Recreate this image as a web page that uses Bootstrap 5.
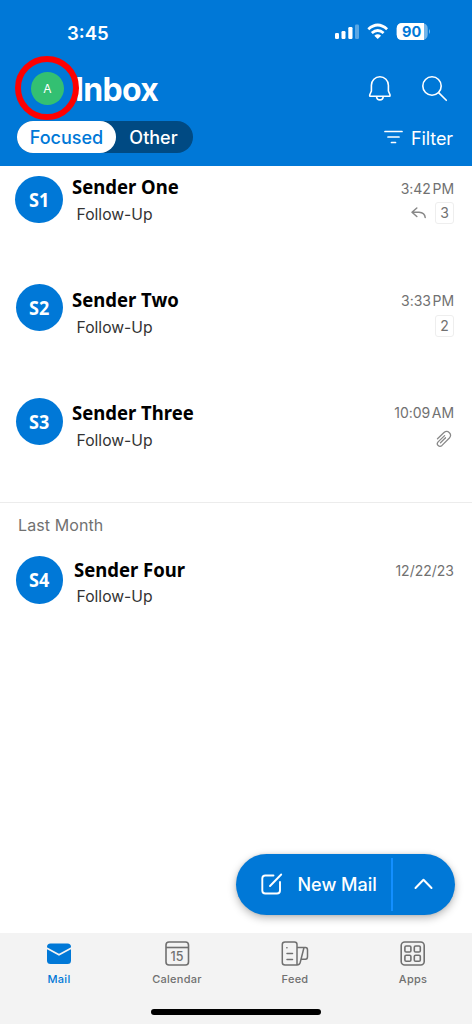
<!DOCTYPE html>
<html lang="en">
<head>
<meta charset="utf-8">
<meta name="viewport" content="width=device-width, initial-scale=1">
<title>Inbox</title>
<link href="https://cdn.jsdelivr.net/npm/bootstrap@5.3.0/dist/css/bootstrap.min.css" rel="stylesheet">
<script src="https://cdn.jsdelivr.net/npm/bootstrap@5.3.0/dist/js/bootstrap.bundle.min.js" defer></script>
<style>
:root{--blue:#0078d7}
body{font-family:Inter,"Liberation Sans",sans-serif;background:#fff;color:#333;height:1024px;overflow:hidden}
svg{display:block;flex:none}
.top-bar{height:166px;background:var(--blue)}
.status{height:64px;padding:0 42px 0 67px}
.clock{font-size:18.5px;font-weight:600;line-height:20px;padding-top:2px}
.title-row{height:50px;padding:0 24px 0 31px}
.me{width:33px;height:33px;margin-top:-1px;background:#33c072;font-size:12px}
.ring{position:absolute;left:-16px;top:-16px;width:64px;height:64px;border:6px solid #f00;border-radius:50%}
.title{font-size:32px;font-weight:700;line-height:40px;letter-spacing:-.7px;margin-left:11px;padding-top:2px}
.tab-row{height:32px;margin-top:7px;padding:0 19px 0 17px}
.segment{width:176px;height:32px;background:#004a83;font-size:18px;font-weight:500}
.segment span{line-height:33px;text-align:center}
.seg-on{width:99px;background:#fff;color:var(--blue)}
.seg-off{width:75px}
.filter{font-size:18px;line-height:32px;letter-spacing:-.1px}
.mail{height:112px;padding:0 18px 0 15px}
.avatar{width:47.5px;height:47.5px;background:var(--blue);color:#fff;font:700 20px/48px "Noto Sans",sans-serif;text-align:center;flex:none}
.avatar span{display:inline-block;transform:scaleX(.9)}
.sender{font:700 20px/26px "Noto Sans",sans-serif;color:#000;transform:scaleX(.925);transform-origin:0 0;white-space:nowrap}
.subject{font-size:15.7px;line-height:20px;padding-left:5px;position:relative;top:1px}
.stamp{font-size:14px;line-height:18px;color:#717171;white-space:nowrap}
.when{word-spacing:-2.2px;letter-spacing:-.05px}
.tally{width:19px;height:22px;border:1px solid #eee;border-radius:3px;font-size:14px;line-height:20px;text-align:center}
.section{height:46px;border-top:1px solid #ececec;padding:12px 18px 0;font-size:16px;letter-spacing:.1px;line-height:20px;color:#717171}
.compose{position:absolute;left:236px;top:853.5px;width:218.5px;height:61.5px;background:var(--blue);box-shadow:0 3px 8px rgba(0,0,0,.28),0 0 3px rgba(0,0,0,.1)}
.compose-main{width:155px;padding-left:25px;font-size:18px;font-weight:500}
.compose-split{width:2px;height:53px;background:#138fff}
.tabs{position:absolute;left:0;top:933px;width:472px;height:91px;background:#f3f3f3;font-size:11px;font-weight:500;color:#707070}
.tab{width:118px;padding-top:7px}
.tab span{line-height:14px;margin-top:3.5px;letter-spacing:.25px}
.home{position:absolute;left:151px;top:76px;width:170px;height:6px;background:#000}
</style>
</head>
<body class="position-relative">
<header class="top-bar text-white">
  <div class="status d-flex align-items-center justify-content-between">
    <span class="clock">3:45</span>
    <svg width="98" height="20" viewBox="332 22 98 20">
      <g fill="#fff"><rect x="335" y="33" width="4" height="6" rx="1.2"/><rect x="341.500" y="31" width="4" height="8" rx="1.2"/><rect x="348.300" y="27" width="4.200" height="12" rx="1.2"/><rect x="355" y="24.500" width="4" height="14.500" rx="1.2" opacity=".35"/></g>
      <g fill="none" stroke="#fff" stroke-width="2.800"><path d="M368.300 29.200Q377.700 20.900 387.100 29.200M371.800 33Q377.700 27.900 383.600 33"/></g>
      <path fill="#fff" d="M374.300 35.700Q377.700 33 381.100 35.700L377.700 39Z"/>
      <rect x="396.700" y="23" width="31" height="17" rx="5.500" fill="#fff" opacity=".45"/><path fill="#fff" d="M402.200 23H424V40H402.200Q396.700 40 396.700 34.500V28.500Q396.700 23 402.200 23Z"/><path d="M429 29Q431 31.500 429 34Z" fill="#fff" opacity=".5"/>
      <text x="411.700" y="37" text-anchor="middle" font-family="Inter" font-weight="700" font-size="14.500" fill="#0078d7">90</text>
    </svg>
  </div>
  <div class="title-row d-flex align-items-center">
    <div class="me rounded-circle position-relative d-flex align-items-center justify-content-center">A<i class="ring"></i></div>
    <h1 class="title mb-0">Inbox</h1>
    <div class="d-flex ms-auto align-items-center">
      <svg width="24" height="26" viewBox="368 76 24 26" fill="none" stroke="#fff" stroke-width="1.600" stroke-linejoin="round"><path d="M371.400 91V85.300A8.500 8.500 0 0 1 388.400 85.300V91L390 94.800Q390.200 96.300 389.400 96.300H370.400Q369.400 96.300 369.800 94.800ZM376.500 96.300Q376.900 99.900 379.900 99.900Q382.900 99.900 383.300 96.300"/></svg>
      <svg class="ms-4" width="32" height="28" viewBox="416 75 32 28" fill="none" stroke="#fff" stroke-width="1.600" stroke-linecap="round"><circle cx="432" cy="86" r="9.200"/><path d="M438.600 92.600L446.300 100.300"/></svg>
    </div>
  </div>
  <div class="tab-row d-flex justify-content-between">
    <div class="segment rounded-pill d-flex"><span class="seg-on rounded-pill">Focused</span><span class="seg-off">Other</span></div>
    <div class="filter d-flex align-items-center"><svg class="me-2" width="19" height="15" viewBox="0 0 19 15" stroke="#fff" stroke-width="1.700" stroke-linecap="round"><path d="M1 1.500H18M4 7H15M7.500 12.500H11.500"/></svg><span class="pt-1" style="line-height:28px">Filter</span></div>
  </div>
</header>
<main>
  <article class="mail d-flex">
    <div class="avatar rounded-circle" style="margin-top:9.5px"><span>S1</span></div>
    <div style="padding:8px 0 0 9px"><div class="sender">Sender One</div><div class="subject" style="margin-top:4px">Follow-Up</div></div>
    <div class="stamp ms-auto d-flex flex-column align-items-end" style="padding-top:14px"><span class="when">3:42 PM</span><div class="d-flex align-items-center mt-1"><svg width="16" height="12" viewBox="0 0 16 12" fill="none" stroke="#888" stroke-width="1.500" stroke-linecap="round" stroke-linejoin="round" style="margin-right:8px"><path d="M5.800 1L1 5.200L5.800 9.500M1 5.200H8Q13.800 5.500 14.200 10.500"/></svg><span class="tally">3</span></div></div>
  </article>
  <article class="mail d-flex">
    <div class="avatar rounded-circle" style="margin-top:5.5px;margin-left:.5px"><span>S2</span></div>
    <div style="padding:9px 0 0 8.5px"><div class="sender">Sender Two</div><div class="subject" style="margin-top:4px">Follow-Up</div></div>
    <div class="stamp ms-auto d-flex flex-column align-items-end" style="padding-top:14px"><span class="when">3:33 PM</span><span class="tally" style="margin-top:5px">2</span></div>
  </article>
  <article class="mail d-flex">
    <div class="avatar rounded-circle" style="margin-top:7.5px;margin-left:.5px"><span>S3</span></div>
    <div style="padding:10px 0 0 8.5px"><div class="sender">Sender Three</div><div class="subject" style="margin-top:4px">Follow-Up</div></div>
    <div class="stamp ms-auto d-flex flex-column align-items-end" style="padding-top:14px"><span class="when">10:09 AM</span><svg style="margin:8px 2px 0 0" width="16" height="18" viewBox="0 0 16 18" fill="none" stroke="#888" stroke-width="1.300" stroke-linecap="round"><path d="M1.500 8.700L8 2.600C11.500-.5 17 4.100 13.400 8L6 15.400C3.300 17.800-.2 14.500 2.100 11.900L8.600 5.600"/><path d="M4.500 12.800L9.500 7.800"/></svg></div>
  </article>
  <div class="section">Last Month</div>
  <article class="mail d-flex">
    <div class="avatar rounded-circle" style="margin-top:8px;margin-left:.5px"><span>S4</span></div>
    <div style="padding:9px 0 0 8.5px"><div class="sender" style="margin-left:2.5px">Sender Four</div><div class="subject" style="margin-top:3px">Follow-Up</div></div>
    <div class="stamp ms-auto" style="padding-top:14px">12/22/23</div>
  </article>
</main>
<div class="compose rounded-pill d-flex align-items-center text-white">
  <div class="compose-main d-flex align-items-center"><svg width="22" height="22" viewBox="0 0 22 22" fill="none" stroke="#fff" stroke-width="1.900" stroke-linecap="round" stroke-linejoin="round"><path d="M12.500 2.500H4.300Q1.300 2.500 1.300 5.500V17.500Q1.300 20.500 4.300 20.500H16Q19 20.500 19 17.500V9M9 13L20.200 1.500"/></svg><span style="margin-left:14.5px;padding-top:1px" class="text-nowrap">New Mail</span></div>
  <div class="compose-split"></div>
  <svg style="margin-left:21px" width="19" height="12" viewBox="0 0 19 12" fill="none" stroke="#fff" stroke-width="2" stroke-linecap="round" stroke-linejoin="round"><path d="M1.500 10L9.500 1.800L17.500 10"/></svg>
</div>
<nav class="tabs d-flex">
  <div class="tab d-flex flex-column align-items-center" style="color:var(--blue)"><svg width="28" height="28" viewBox="45 940 28 28"><rect x="47" y="943.500" width="24" height="20.500" rx="3.500" fill="#0078d7"/><path d="M46.500 948L59 954.800L71.500 948" fill="none" stroke="#f3f3f3" stroke-width="1.600"/></svg><span>Mail</span></div>
  <div class="tab d-flex flex-column align-items-center"><svg width="28" height="28" viewBox="163 940 28 28" fill="none" stroke="#707070" stroke-width="1.600"><rect x="166" y="942" width="22.500" height="23" rx="3"/><path d="M166 947.500H188.500"/><text x="177" y="960.500" text-anchor="middle" font-family="Inter" font-size="12.500" font-weight="500" fill="#707070" stroke="none">15</text></svg><span>Calendar</span></div>
  <div class="tab d-flex flex-column align-items-center"><svg width="28" height="28" viewBox="281 940 28 28" fill="none" stroke="#707070" stroke-width="1.500" stroke-linejoin="round" stroke-linecap="round"><path d="M297 965H285Q282.300 965 282.300 962.500V944.500Q282.300 942 285 942H294.500Q297 942 297 944.500V965Q299.500 965 300.200 962.500L304 947.500H297M304 947.500H305.500Q307.500 947.500 307.500 950V956.500Q307.500 959.300 305.500 959.300H301.200M287 953.500H292.500M287 959.500H292.500M286.800 947.800H287"/></svg><span>Feed</span></div>
  <div class="tab d-flex flex-column align-items-center"><svg width="28" height="28" viewBox="399 940 28 28" fill="none" stroke="#707070" stroke-width="1.600"><rect x="401.200" y="942" width="23" height="23" rx="3.500"/><rect x="404.900" y="946" width="6" height="6" rx="1.300"/><rect x="414.300" y="946" width="6" height="6" rx="1.300"/><rect x="404.900" y="955.300" width="6" height="6" rx="1.300"/><rect x="414.300" y="955.300" width="6" height="6" rx="1.300"/></svg><span>Apps</span></div>
  <i class="home rounded-pill"></i>
</nav>
</body>
</html>
